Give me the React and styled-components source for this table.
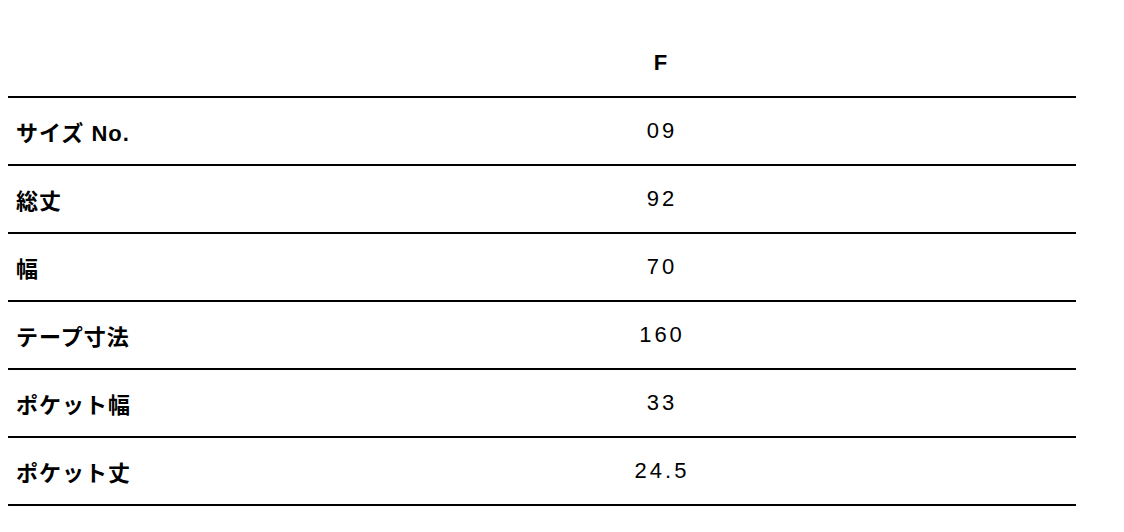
import React from "react";
import styled, { createGlobalStyle } from "styled-components";

const GlobalStyle = createGlobalStyle`
  body {
    margin: 0;
    background: #fff;
    color: #000;
    font-family: "Liberation Sans", "Noto Sans CJK JP", sans-serif;
  }
`;

const Wrap = styled.div`
  padding: 29px 0 0 8px;
`;

const Table = styled.table`
  width: 1068px;
  border-collapse: collapse;
  table-layout: fixed;
`;

const Row = styled.tr`
  height: 68px;
  border-bottom: 2px solid #000;
`;

const Label = styled.th`
  width: 222px;
  padding: 0 8px;
  text-align: left;
  font-size: 22px;
  font-weight: 700;
  letter-spacing: 1px;
`;

const Cell = styled.td`
  text-align: center;
  font-size: 22px;
  font-weight: ${(p) => (p.$head ? 700 : 400)};
  letter-spacing: ${(p) => (p.$head ? "0" : "3px")};
  padding-left: ${(p) => (p.$head ? "0" : "3px")};
`;

const rows = [
  ["サイズ No.", "09"],
  ["総丈", "92"],
  ["幅", "70"],
  ["テープ寸法", "160"],
  ["ポケット幅", "33"],
  ["ポケット丈", "24.5"],
];

export default function App() {
  return (
    <Wrap>
      <GlobalStyle />
      <Table>
        <thead>
          <Row>
            <Label />
            <Cell as="th" $head>
              F
            </Cell>
          </Row>
        </thead>
        <tbody>
          {rows.map(([k, v]) => (
            <Row key={k}>
              <Label>{k}</Label>
              <Cell>{v}</Cell>
            </Row>
          ))}
        </tbody>
      </Table>
    </Wrap>
  );
}
